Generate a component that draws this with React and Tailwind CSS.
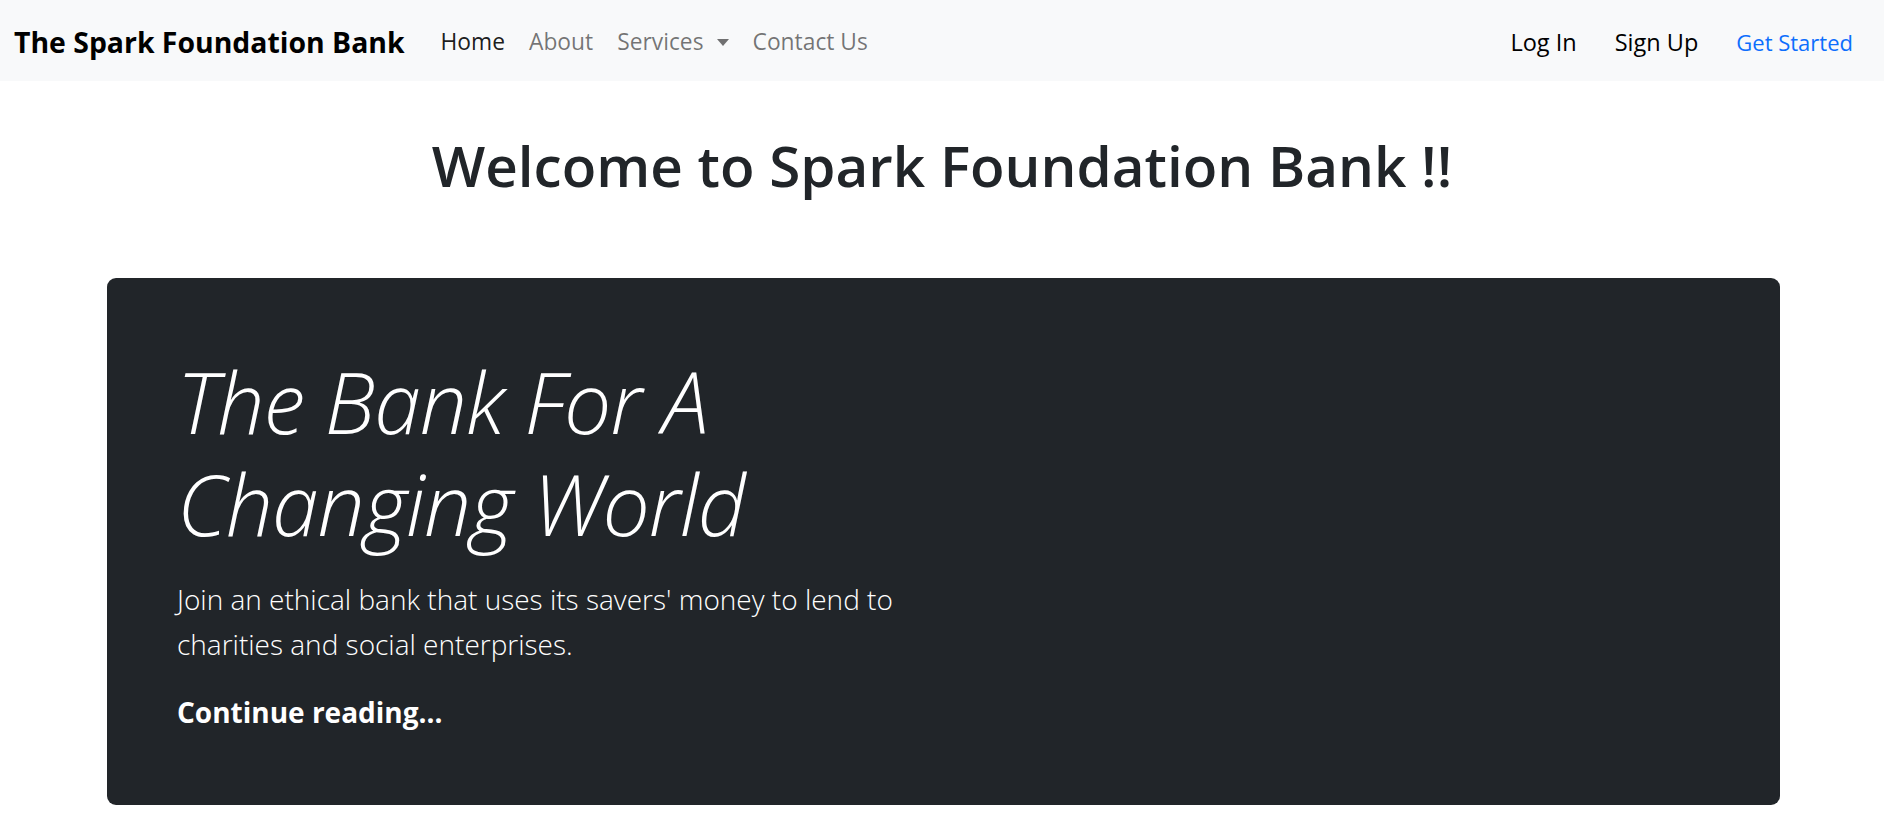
import React from 'react';

const font = { fontFamily: '"Open Sans", "Noto Sans", sans-serif' };

function NavBar() {
  return (
    <nav className="flex items-center justify-between h-[81px] bg-[#f8f9fa] pl-[14px] pr-[31px] pt-[4px]">
      <div className="flex items-center">
        <a href="#" className="text-[28.4px] font-bold text-black mr-[24px]">
          The Spark Foundation Bank
        </a>
        <ul className="flex items-center text-[22.8px]">
          <li className="px-[12px] text-[rgba(0,0,0,0.9)]">Home</li>
          <li className="px-[12px] text-[rgba(0,0,0,0.55)]">About</li>
          <li className="px-[12px] text-[rgba(0,0,0,0.55)] flex items-center gap-[13px]">
            Services
            <span className="inline-block w-0 h-0 border-l-[6px] border-r-[6px] border-t-[7px] border-l-transparent border-r-transparent border-t-[rgba(0,0,0,0.55)]" />
          </li>
          <li className="px-[12px] text-[rgba(0,0,0,0.55)]">Contact Us</li>
        </ul>
      </div>
      <div className="flex items-center gap-[38px] text-[23.5px]">
        <a href="#" className="text-black">Log In</a>
        <a href="#" className="text-black">Sign Up</a>
        <a href="#" className="text-[#0d6efd] text-[22px]">Get Started</a>
      </div>
    </nav>
  );
}

export default function App() {
  return (
    <div style={font} className="min-h-[838px] bg-white text-[#212529]">
      <NavBar />
      <h1 className="text-center text-[56.6px] font-semibold leading-[1.2] pt-[51px] pb-[78px]">
        Welcome to Spark Foundation Bank !!
      </h1>
      <div className="ml-[107px] mr-[104px] rounded-[9px] bg-[#212529] text-white px-[70px] pt-[73px] pb-[72px]">
        <div className="w-[720px]">
          <h1 className="text-[84px] font-light italic leading-[102px] tracking-[-1px]">
            The Bank For A Changing World
          </h1>
          <p className="text-[28px] font-light leading-[45px] mt-[22px]">
            Join an ethical bank that uses its savers' money to lend to charities and social enterprises.
          </p>
          <p className="text-[28px] font-bold mt-[24px]">
            <a href="#" className="text-white">Continue reading...</a>
          </p>
        </div>
      </div>
    </div>
  );
}
